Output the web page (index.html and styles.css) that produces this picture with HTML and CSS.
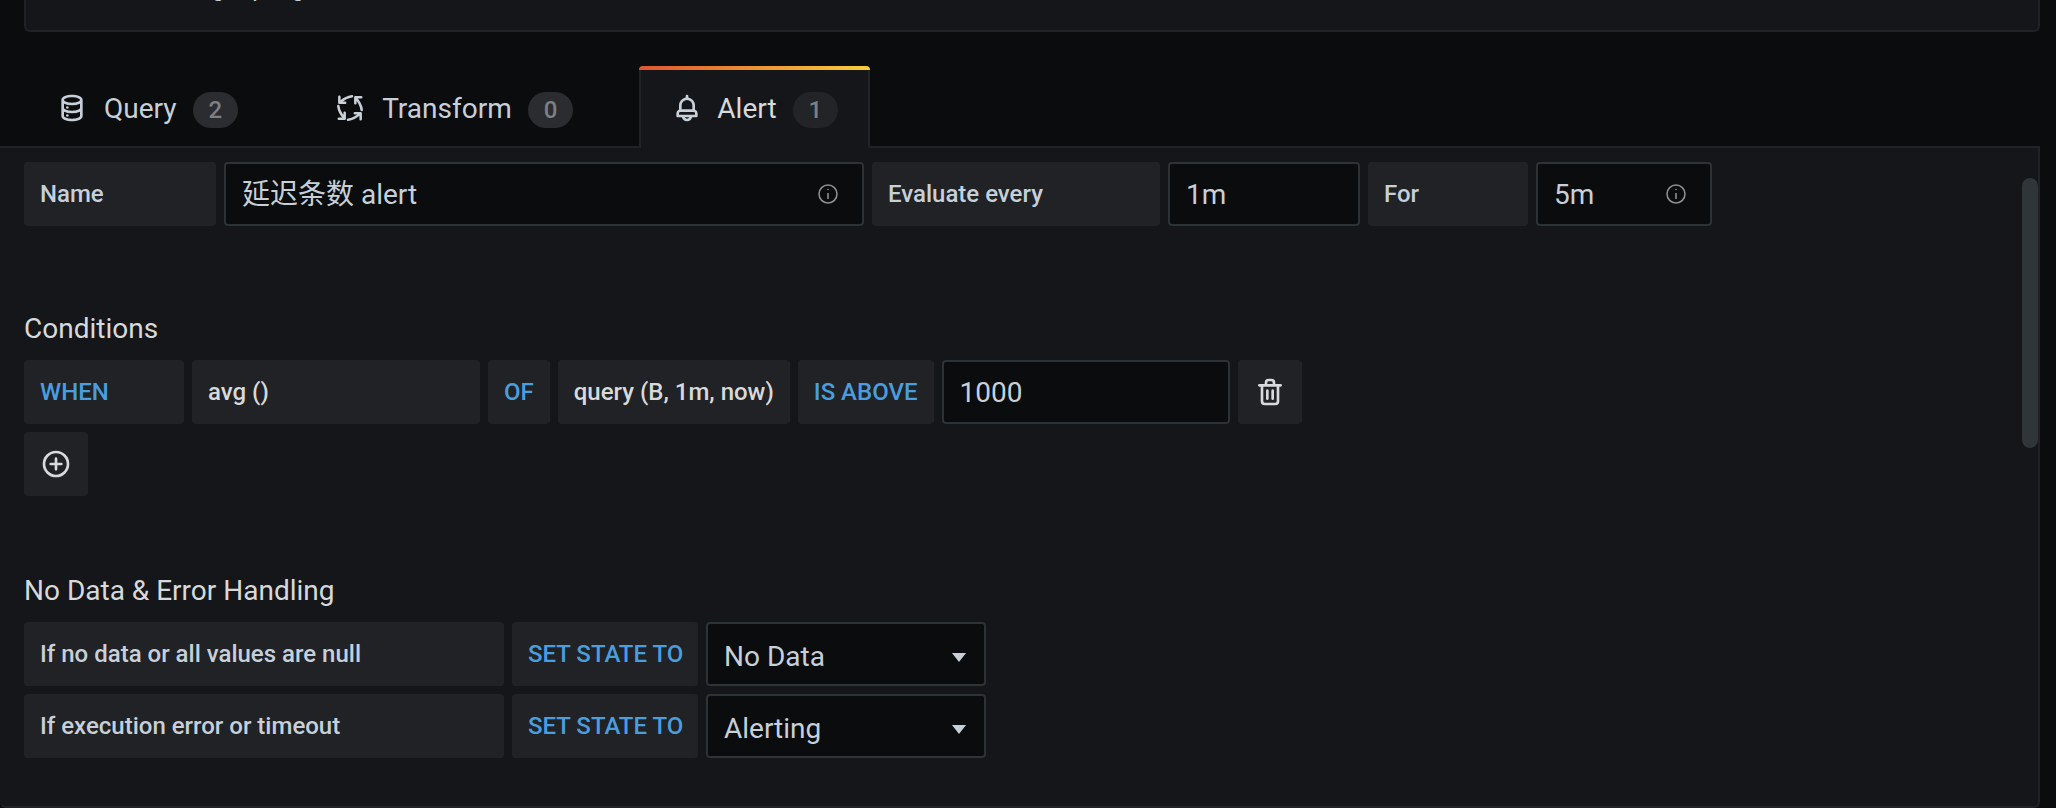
FILE: index.html
```html
<!DOCTYPE html>
<html lang="en">
<head>
    <meta charset="UTF-8">
    <meta name="viewport" content="width=device-width, initial-scale=1.0">
    <title>Alert</title>
    <link rel="stylesheet" href="styles.css">
</head>
<body>

<div class="query-panel">
    <div class="query-text">Log top log</div>
</div>

<div class="tabs">
    <div class="tab">
        <svg class="tab-icon" viewBox="0 0 24 24"><path d="M12,2C8,2,4,3.37,4,6V18c0,2.63,4,4,8,4s8-1.37,8-4V6C20,3.37,16,2,12,2Zm6,16c0,.71-2.28,2-6,2s-6-1.29-6-2V14.73A13.16,13.16,0,0,0,12,16a13.16,13.16,0,0,0,6-1.27Zm0-6c0,.71-2.28,2-6,2s-6-1.29-6-2V8.73A13.16,13.16,0,0,0,12,10a13.16,13.16,0,0,0,6-1.27ZM12,8C8.28,8,6,6.71,6,6s2.28-2,6-2,6,1.29,6,2S15.72,8,12,8Z"/><circle cx="8.5" cy="11.6" r="1"/><circle cx="8.5" cy="17.6" r="1"/></svg>
        <span class="tab-label">Query</span>
        <span class="badge">2</span>
    </div>
    <div class="tab">
        <svg class="tab-icon" viewBox="0 0 24 24">
            <g class="arrows">
                <path d="M13.5,3.2 C10.5,3.6 7.5,5 4.6,7.6 M4,3.6 V8 H8.4"/>
                <path transform="rotate(-90 12 12)" d="M13.5,3.2 C10.5,3.6 7.5,5 4.6,7.6 M4,3.6 V8 H8.4"/>
                <path transform="rotate(180 12 12)" d="M13.5,3.2 C10.5,3.6 7.5,5 4.6,7.6 M4,3.6 V8 H8.4"/>
                <path transform="rotate(90 12 12)" d="M13.5,3.2 C10.5,3.6 7.5,5 4.6,7.6 M4,3.6 V8 H8.4"/>
            </g>
        </svg>
        <span class="tab-label">Transform</span>
        <span class="badge">0</span>
    </div>
    <div class="tab active">
        <svg class="tab-icon" viewBox="0 0 24 24"><path d="M18,13.18V10a6,6,0,0,0-5-5.91V3a1,1,0,0,0-2,0V4.09A6,6,0,0,0,6,10v3.18A3,3,0,0,0,4,16v2a1,1,0,0,0,1,1H8.14a4,4,0,0,0,7.72,0H19a1,1,0,0,0,1-1V16A3,3,0,0,0,18,13.18ZM8,10a4,4,0,0,1,8,0v3H8Zm4,10a2,2,0,0,1-1.72-1h3.44A2,2,0,0,1,12,20Zm6-3H6V16a1,1,0,0,1,1-1H17a1,1,0,0,1,1,1Z"/></svg>
        <span class="tab-label">Alert</span>
        <span class="badge">1</span>
    </div>
</div>

<div class="alert-panel">
    <div class="scrollbar"></div>

    <div class="form-row">
        <div class="label name-label">Name</div>
        <div class="input name-input">
            <span class="name-value">延迟条数 alert</span>
            <svg class="info" viewBox="0 0 24 24"><circle cx="12" cy="12" r="9"/><path d="M12,11V17M12,7V8"/></svg>
        </div>
        <div class="label every-label">Evaluate every</div>
        <div class="input every-input"><span>1m</span></div>
        <div class="label for-label">For</div>
        <div class="input for-input">
            <span>5m</span>
            <svg class="info" viewBox="0 0 24 24"><circle cx="12" cy="12" r="9"/><path d="M12,11V17M12,7V8"/></svg>
        </div>
    </div>

    <h2 class="section-title conditions-title">Conditions</h2>
    <div class="form-row">
        <div class="label keyword when-label">WHEN</div>
        <div class="label strong avg-label">avg ()</div>
        <div class="label keyword">OF</div>
        <div class="label strong">query (B, 1m, now)</div>
        <div class="label keyword">IS ABOVE</div>
        <div class="input value-input"><span>1000</span></div>
        <div class="label icon-button">
            <svg viewBox="0 0 24 24"><path d="M10,18a1,1,0,0,0,1-1V11a1,1,0,0,0-2,0v6A1,1,0,0,0,10,18ZM20,6H16V5a3,3,0,0,0-3-3H11A3,3,0,0,0,8,5V6H4A1,1,0,0,0,4,8H5V19a3,3,0,0,0,3,3h8a3,3,0,0,0,3-3V8h1a1,1,0,0,0,0-2ZM10,5a1,1,0,0,1,1-1h2a1,1,0,0,1,1,1V6H10Zm7,14a1,1,0,0,1-1,1H8a1,1,0,0,1-1-1V8H17Zm-3-1a1,1,0,0,0,1-1V11a1,1,0,0,0-2,0v6A1,1,0,0,0,14,18Z"/></svg>
        </div>
    </div>
    <div class="form-row">
        <div class="label icon-button">
            <svg viewBox="0 0 24 24"><path d="M12,2A10,10,0,1,0,22,12,10,10,0,0,0,12,2Zm0,18a8,8,0,1,1,8-8A8,8,0,0,1,12,20Zm4-9H13V8a1,1,0,0,0-2,0v3H8a1,1,0,0,0,0,2h3v3a1,1,0,0,0,2,0V13h3a1,1,0,0,0,0-2Z"/></svg>
        </div>
    </div>

    <h2 class="section-title nodata-title">No Data &amp; Error Handling</h2>
    <div class="form-row">
        <div class="label handling-label">If no data or all values are null</div>
        <div class="label keyword state-label">SET STATE TO</div>
        <div class="input select"><span>No Data</span><i class="caret"></i></div>
    </div>
    <div class="form-row">
        <div class="label handling-label">If execution error or timeout</div>
        <div class="label keyword state-label">SET STATE TO</div>
        <div class="input select"><span>Alerting</span><i class="caret"></i></div>
    </div>
</div>

</body>
</html>
```

FILE: styles.css
```css
* {
  box-sizing: border-box;
  margin: 0;
  padding: 0;
}

html, body {
  width: 100%;
  height: 100%;
  overflow: hidden;
}

body {
  background: #0b0c0e;
  color: #c7d0d9;
  font-family: Roboto, "Noto Sans CJK SC", sans-serif;
  font-size: 28px;
}

.query-panel {
  height: 32px;
  margin: 0 16px 0 24px;
  background: #141619;
  border: 2px solid #202226;
  border-top: 0;
  border-radius: 0 0 6px 6px;
  overflow: hidden;
}

.query-text {
  margin: -26px 0 0 159px;
  font-size: 24px;
  line-height: 28px;
}

/* Tabs */
.tabs {
  display: flex;
  gap: 32px;
  height: 82px;
  margin: 34px 16px 0 0;
  padding-left: 24px;
  border-bottom: 2px solid #202226;
}

.tab {
  display: flex;
  align-items: center;
  height: 80px;
  padding: 8px 32px 0;
  color: #c7d0d9;
}

.tab-label {
  padding-bottom: 4px;
}

.tab.active {
  position: relative;
  height: 82px;
  margin-left: 2px;
  margin-bottom: -2px;
  padding: 8px 30px 2px;
  color: #d8d9da;
  background: #141619;
  border: solid #202226;
  border-width: 0 2px;
  border-radius: 4px 4px 0 0;
}

.tab.active::before {
  content: "";
  position: absolute;
  top: 0;
  left: -2px;
  right: -2px;
  height: 4px;
  background: linear-gradient(90deg, #e0552f, #f9cf3a);
  border-radius: 4px 4px 0 0;
}

.tab-icon {
  width: 32px;
  height: 32px;
  margin-right: 16px;
  margin-bottom: 4px;
  fill: #c7d0d9;
}

.tab.active .tab-icon {
  margin-right: 14px;
}

.tab-icon .arrows {
  fill: none;
  stroke: #c7d0d9;
  stroke-width: 1.9;
  stroke-linecap: round;
  stroke-linejoin: round;
}

.badge {
  height: 36px;
  margin-left: 16px;
  padding: 0 16px;
  border-radius: 18px;
  background: #2a2c30;
  color: #7b8087;
  font-size: 24px;
  font-weight: 500;
  line-height: 36px;
}

.tab.active .badge {
  background: #222428;
}

/* Alert form */
.alert-panel {
  position: relative;
  height: 660px;
  margin-right: 16px;
  padding: 14px 24px 0;
  background: #141619;
  border-right: 2px solid #202226;
  border-bottom: 2px solid #202226;
  border-radius: 0 0 6px 6px;
}

.scrollbar {
  position: absolute;
  top: 30px;
  right: 0;
  width: 16px;
  height: 270px;
  background: #2f3538;
  border-radius: 8px;
}

.form-row {
  display: flex;
  gap: 8px;
  margin-bottom: 8px;
}

.label {
  display: flex;
  align-items: center;
  height: 64px;
  padding: 0 16px;
  background: #202226;
  border-radius: 4px;
  color: #c7d0d9;
  font-size: 24px;
  font-weight: 500;
}

.label.keyword {
  color: #4a9ddf;
}

.label.strong {
  color: #d8d9da;
}

.input {
  display: flex;
  align-items: center;
  justify-content: space-between;
  height: 64px;
  padding: 0 16px;
  background: #0b0c0e;
  border: 2px solid #2c3235;
  border-radius: 4px;
  color: #c7d0d9;
}

.name-value {
  padding-bottom: 4px;
}

.name-label { width: 192px; }
.name-input { width: 640px; }
.every-label { width: 288px; }
.every-input { width: 192px; }
.for-label { width: 160px; }
.for-input { width: 176px; }
.when-label { width: 160px; }
.avg-label { width: 288px; }
.value-input { width: 288px; }
.handling-label { width: 480px; }
.state-label { width: 186px; white-space: nowrap; }

.info {
  width: 24px;
  height: 24px;
  margin-right: 6px;
  fill: none;
  stroke: #8e8e8e;
  stroke-width: 1.6;
}

.icon-button {
  justify-content: center;
  width: 64px;
  padding: 0;
}

.icon-button svg {
  width: 32px;
  height: 32px;
  fill: #d8d9da;
}

.section-title {
  color: #d8d9da;
  font-size: 28px;
  font-weight: 400;
  line-height: 32px;
  margin-bottom: 15px;
}

.conditions-title {
  margin-top: 87px;
}

.nodata-title {
  margin-top: 79px;
}

.select {
  width: 280px;
  padding-top: 4px;
}

.caret {
  width: 0;
  height: 0;
  margin-top: 2px;
  margin-right: 2px;
  border-style: solid;
  border-width: 9px 7.5px 0;
  border-color: #c7d0d9 transparent transparent;
}
```
